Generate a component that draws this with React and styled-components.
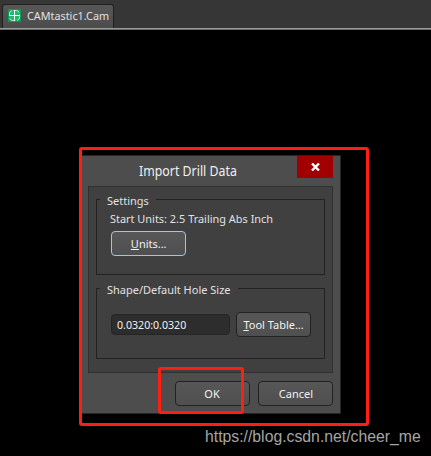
import React from "react";
import styled, { createGlobalStyle } from "styled-components";

const GlobalStyle = createGlobalStyle`
  * { box-sizing: border-box; }
  body { margin: 0; background: #000; overflow: hidden; }
`;

const Screen = styled.div`
  position: relative;
  width: 431px;
  height: 456px;
  background: #000;
  color: #e2e2e2;
  font: 11.5px/14px "Noto Sans", "Open Sans", sans-serif;
  white-space: nowrap;
  overflow: hidden;
`;

const Label = styled.span`
  display: inline-block;
  transform: scaleX(${(p) => p.$scale || 0.955});
  transform-origin: ${(p) => (p.$centered ? "center" : "left")};
`;

const TabBar = styled.div`
  display: flex;
  align-items: flex-end;
  height: 30px;
  padding: 0 2px 1px;
  background: #363636;
  border-bottom: 1px solid #6a6c6c;
  box-shadow: inset 0 -1px #999b9b;
`;

const Tab = styled.div`
  display: flex;
  align-items: center;
  gap: 6px;
  width: 112px;
  height: 24px;
  padding: 0 0 2px 5px;
  background: linear-gradient(#575757, #4c4c4c);
  border: 1px solid #202020;
  border-bottom: 0;
  border-radius: 3px 3px 0 0;
`;

const Dialog = styled.section`
  width: 260px;
  height: 259px;
  margin: 125px 0 0 81px;
  background: #4d4d4d;
  border: 1px solid #262626;
`;

const TitleBar = styled.header`
  display: flex;
  justify-content: flex-end;
  height: 30px;
  padding-right: 7px;
`;

const Title = styled.h1`
  flex: 1;
  min-width: 0;
  margin: 0;
  padding: 7px 0 0 57px;
  font-size: 13.5px;
  line-height: 16px;
  font-weight: 400;
  color: #f0f0f0;
`;

const CloseButton = styled.button`
  display: flex;
  flex: none;
  align-items: center;
  justify-content: center;
  width: 36px;
  height: 22px;
  padding: 0;
  border: 0;
  background: #a00000;
`;

const Panel = styled.div`
  display: flex;
  flex-direction: column;
  gap: 6px;
  width: 245px;
  height: 187px;
  margin-left: 6px;
  padding: 5px 7px 0;
  background: #404040;
  border: 1px solid #303030;
`;

const Group = styled.fieldset`
  width: 229px;
  height: ${(p) => p.$height}px;
  margin: 0;
  padding: 0 0 0 3px;
  border: 1px solid #222;
  min-width: 0;
`;

const Legend = styled.legend`
  width: ${(p) => p.$width}px;
  height: 14px;
  padding: 0 0 0 7px;
  line-height: 18px;
`;

const Line = styled.div`
  padding: 6px 0 0 10px;
  height: 25px;
`;

const Row = styled.div`
  display: flex;
  align-items: center;
  gap: 6px;
  padding: ${(p) => p.$top || 0}px 0 0 11px;
`;

const Button = styled.button`
  display: flex;
  align-items: center;
  justify-content: center;
  width: 75px;
  height: 25px;
  padding: 1px 0 0;
  color: #f2f2f2;
  font: inherit;
  background: linear-gradient(#575757, #4f4f4f);
  border: 1px solid ${(p) => (p.$focused ? "#9fc5ec" : "#222")};
  border-radius: 4px;
`;

const Field = styled.div`
  width: 119px;
  height: 21px;
  padding-left: 5px;
  background: #2d2d2d;
  border: 1px solid #252525;
  border-radius: 4px;
`;

const Input = styled.input`
  display: block;
  width: 110px;
  height: 18px;
  padding: 0;
  color: #f2f2f2;
  font: inherit;
  background: none;
  border: 0;
  transform: scaleX(0.923);
  transform-origin: left;
`;

const Footer = styled.footer`
  display: flex;
  justify-content: flex-end;
  gap: 8px;
  padding: 8px 7px 0 0;
`;

const Highlight = styled.div`
  position: absolute;
  left: ${(p) => p.$x}px;
  top: ${(p) => p.$y}px;
  width: ${(p) => p.$w}px;
  height: ${(p) => p.$h}px;
  border: 3px solid #ff1f12;
  border-radius: 3px;
`;

const Watermark = styled.div`
  position: absolute;
  left: 205px;
  top: 427px;
  color: #a5a5a5;
  font: 17px/20px "Liberation Sans", Arial, sans-serif;
`;

const TabIcon = styled.svg`
  flex: none;
  width: 13px;
  height: 13px;
`;

const CamIcon = () => (
  <TabIcon viewBox="0 0 13 13">
    <rect width="13" height="13" fill="#0a9c54" />
    <rect x="1.5" y="1.5" width="10" height="10" rx="3" fill="#27b56d" stroke="#bdebd3" strokeDasharray="6.7 2" strokeDashoffset="-1" />
    <path d="M6.5 1v11M1 6.5h11" stroke="#fff" />
  </TabIcon>
);

const CloseIcon = () => (
  <svg width="9" height="8" viewBox="0 0 9 8">
    <path d="M1 .5 8 7.5M8 .5 1 7.5" stroke="#fff" strokeWidth="2.4" />
  </svg>
);

export default function App() {
  return (
    <Screen>
      <GlobalStyle />
      <TabBar>
        <Tab>
          <CamIcon />
          <Label $scale={0.94}>CAMtastic1.Cam</Label>
        </Tab>
      </TabBar>
      <Dialog>
        <TitleBar>
          <Title><Label $scale={0.915}>Import Drill Data</Label></Title>
          <CloseButton aria-label="Close"><CloseIcon /></CloseButton>
        </TitleBar>
        <Panel>
          <Group $height={83}>
            <Legend $width={56}><Label>Settings</Label></Legend>
            <Line><Label $scale={0.95}>Start Units: 2.5 Trailing Abs Inch</Label></Line>
            <Row>
              <Button $focused><Label $centered><u>U</u>nits...</Label></Button>
            </Row>
          </Group>
          <Group $height={78}>
            <Legend $width={138}><Label>Shape/Default Hole Size</Label></Legend>
            <Row $top={17}>
              <Field><Input defaultValue="0.0320:0.0320" /></Field>
              <Button><Label $centered><u>T</u>ool Table...</Label></Button>
            </Row>
          </Group>
        </Panel>
        <Footer>
          <Button><Label $centered>OK</Label></Button>
          <Button><Label $centered>Cancel</Label></Button>
        </Footer>
      </Dialog>
      <Highlight $x={79} $y={147} $w={290} $h={279} />
      <Highlight $x={158} $y={367} $w={86} $h={47} />
      <Watermark><Label $scale={0.928}>https://blog.csdn.net/cheer_me</Label></Watermark>
    </Screen>
  );
}
